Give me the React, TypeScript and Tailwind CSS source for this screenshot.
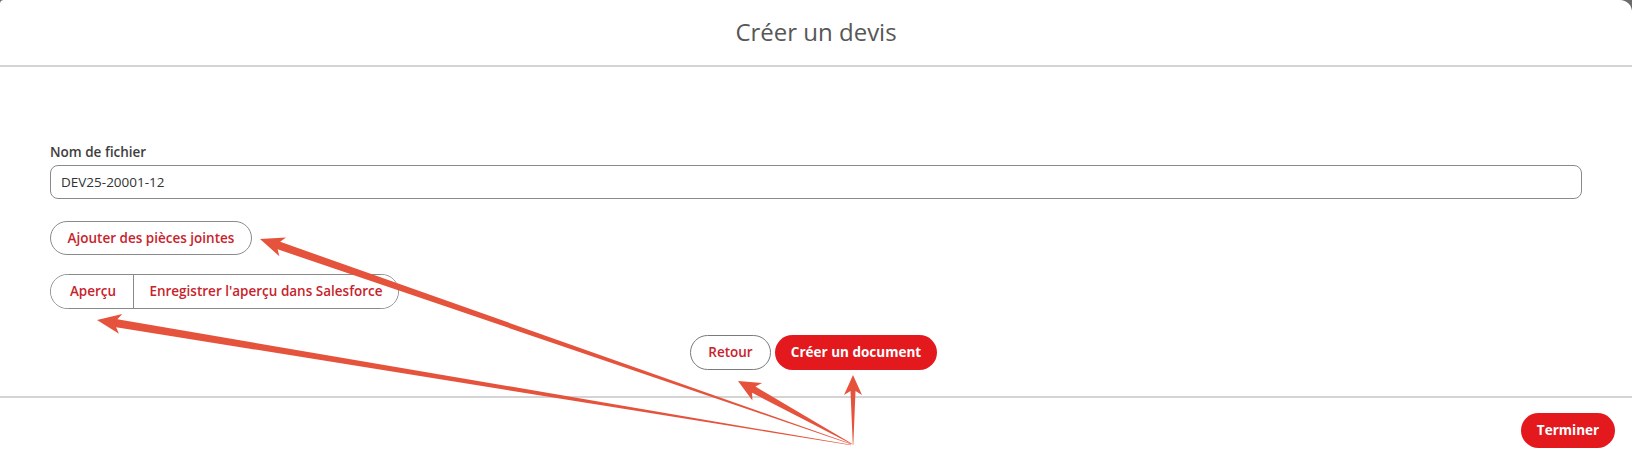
import React from "react";

type Pt = [number, number];

// Tapered annotation arrow: hairline at the tail, widening toward a barbed head.
function arrowPoints(tail: Pt, tip: Pt, headLen: number, headHalf: number, bodyHalf: number): string {
  const dx = tip[0] - tail[0];
  const dy = tip[1] - tail[1];
  const len = Math.hypot(dx, dy);
  const ux = dx / len;
  const uy = dy / len;
  const nx = -uy;
  const ny = ux;
  const base: Pt = [tip[0] - ux * headLen, tip[1] - uy * headLen];
  const notch: Pt = [base[0] + ux * 4, base[1] + uy * 4];
  const t0 = 0.25;
  const pts: Pt[] = [
    [tail[0] + nx * t0, tail[1] + ny * t0],
    [notch[0] + nx * bodyHalf, notch[1] + ny * bodyHalf],
    [base[0] + nx * headHalf, base[1] + ny * headHalf],
    tip,
    [base[0] - nx * headHalf, base[1] - ny * headHalf],
    [notch[0] - nx * bodyHalf, notch[1] - ny * bodyHalf],
    [tail[0] - nx * t0, tail[1] - ny * t0],
  ];
  return pts.map((p) => `${p[0].toFixed(1)},${p[1].toFixed(1)}`).join(" ");
}

const arrows: { tail: Pt; tip: Pt; head: number; half: number; body: number }[] = [
  { tail: [851, 444], tip: [260, 239], head: 24, half: 10, body: 4 },
  { tail: [851, 445], tip: [97, 320], head: 24, half: 10, body: 4 },
  { tail: [852, 444], tip: [738, 381], head: 22, half: 10, body: 3.5 },
  { tail: [853, 445], tip: [853, 375], head: 20, half: 9, body: 2.5 },
];

function Annotations() {
  return (
    <svg
      className="absolute inset-0 pointer-events-none"
      width={1632}
      height={461}
      viewBox="0 0 1632 461"
    >
      {arrows.map((a, i) => (
        <polygon key={i} points={arrowPoints(a.tail, a.tip, a.head, a.half, a.body)} fill="#e5533d" />
      ))}
    </svg>
  );
}

const font = { fontFamily: "'Open Sans', 'Noto Sans', Arial, sans-serif" };

export default function App() {
  return (
    <div className="relative w-[1632px] h-[461px] bg-[#6b6b6b] overflow-hidden" style={font}>
      <div className="flex flex-col h-full bg-white rounded-tl-[4px] rounded-tr-[12px]">
        {/* Header */}
        <div className="h-[67px] shrink-0 flex items-center justify-center border-b-2 border-[#d4d4d4]">
          <h1 className="text-[24px] text-[#575757] font-normal leading-none -mt-[1px]">Créer un devis</h1>
        </div>

        {/* Body */}
        <div className="h-[331px] shrink-0 flex flex-col pl-[50px] pr-[50px] pt-[76px] border-b-2 border-[#d4d4d4]">
          <label className="text-[13.5px] leading-[18px] font-semibold text-[#3e3e3e] mb-[4px]">Nom de fichier</label>
          <div className="h-[34px] w-[1532px] border border-[#8a8a8a] rounded-[8px] flex items-center pl-[10px] text-[13.5px] text-[#333333]">
            DEV25-20001-12
          </div>

          <div className="mt-[22px]">
            <button className="h-[34px] w-[202px] rounded-full border border-[#8a8a8a] text-[13.5px] font-semibold text-[#c8232c] bg-white">
              Ajouter des pièces jointes
            </button>
          </div>

          <div className="mt-[19px] flex">
            <div className="flex h-[35px] rounded-full border border-[#8a8a8a] overflow-hidden text-[13.5px] font-semibold text-[#c8232c]">
              <button className="w-[83px] pl-[2px] border-r border-[#8a8a8a] bg-white">Aperçu</button>
              <button className="w-[264px] bg-white">Enregistrer l'aperçu dans Salesforce</button>
            </div>
          </div>

          <div className="mt-[26px] flex justify-center gap-[4px] -ml-[50px] -mr-[50px] pr-[5px]">
            <button className="h-[35px] w-[81px] rounded-full border border-[#7a7a7a] bg-white text-[13.5px] font-semibold text-[#c8232c]">
              Retour
            </button>
            <button className="h-[35px] w-[162px] rounded-full bg-[#e3191e] text-[13.5px] font-bold text-white">
              Créer un document
            </button>
          </div>
        </div>

        {/* Footer */}
        <div className="flex justify-end pt-[15px] pr-[17px]">
          <button className="h-[35px] w-[94px] rounded-full bg-[#e3191e] text-[13.5px] font-bold text-white">
            Terminer
          </button>
        </div>
      </div>
      <Annotations />
    </div>
  );
}
